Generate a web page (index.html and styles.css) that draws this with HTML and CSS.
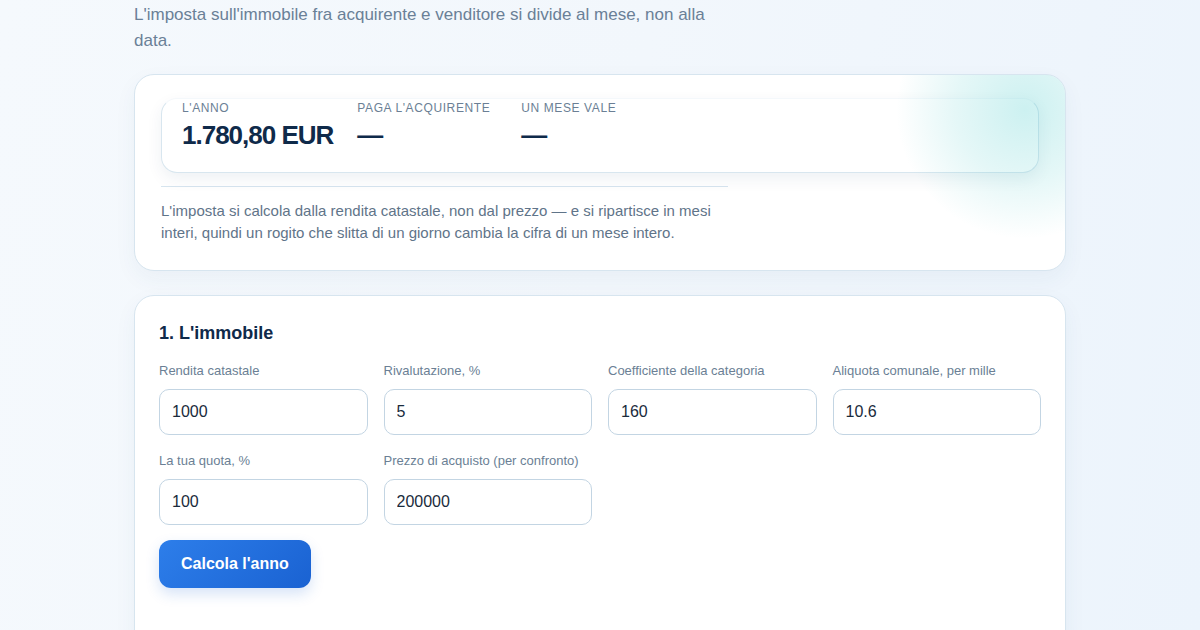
FILE: index.html
```html
<!DOCTYPE html>
<html lang="it">
<head>
<meta charset="utf-8">
<title>IMU al rogito</title>
<link rel="stylesheet" href="styles.css">
</head>
<body>
<main class="page">
  <p class="lead">L'imposta sull'immobile fra acquirente e venditore si divide al mese, non alla data.</p>

  <section class="card summary">
    <div class="glow"></div>
    <div class="result">
      <div class="stat">
        <div class="stat-label">L'anno</div>
        <div class="stat-value">1.780,80 EUR</div>
      </div>
      <div class="stat">
        <div class="stat-label">Paga l'acquirente</div>
        <div class="stat-value">—</div>
      </div>
      <div class="stat">
        <div class="stat-label">Un mese vale</div>
        <div class="stat-value">—</div>
      </div>
    </div>
    <hr class="divider">
    <p class="note">L'imposta si calcola dalla rendita catastale, non dal prezzo — e si ripartisce in mesi interi, quindi un rogito che slitta di un giorno cambia la cifra di un mese intero.</p>
  </section>

  <section class="card form">
    <h2 class="form-title">1. L'immobile</h2>
    <div class="grid">
      <label class="field">
        <span class="field-label">Rendita catastale</span>
        <input class="input" type="text" value="1000">
      </label>
      <label class="field">
        <span class="field-label">Rivalutazione, %</span>
        <input class="input" type="text" value="5">
      </label>
      <label class="field">
        <span class="field-label">Coefficiente della categoria</span>
        <input class="input" type="text" value="160">
      </label>
      <label class="field">
        <span class="field-label">Aliquota comunale, per mille</span>
        <input class="input" type="text" value="10.6">
      </label>
      <label class="field">
        <span class="field-label">La tua quota, %</span>
        <input class="input" type="text" value="100">
      </label>
      <label class="field">
        <span class="field-label">Prezzo di acquisto (per confronto)</span>
        <input class="input" type="text" value="200000">
      </label>
    </div>
    <button class="btn" type="button">Calcola l'anno</button>
  </section>
</main>
</body>
</html>
```

FILE: styles.css
```css
* { box-sizing: border-box; }

html, body {
  margin: 0;
  padding: 0;
  height: 100%;
}

body {
  font-family: "Liberation Sans", Arial, sans-serif;
  background: linear-gradient(100deg, #f5f9fd 0%, #f2f7fc 50%, #ecf4fc 100%);
  color: #0f2a4a;
  overflow: hidden;
}

.page {
  width: 932px;
  margin: 0 auto;
  padding-top: 2px;
}

.lead {
  margin: 0 0 20px;
  max-width: 600px;
  font-size: 17px;
  line-height: 26px;
  color: #6a8097;
}

.card {
  background: #ffffff;
  border: 1px solid #d7e5ef;
  border-radius: 20px;
  box-shadow: 0 8px 22px rgba(30, 70, 120, 0.05);
}

.summary {
  position: relative;
  overflow: hidden;
  padding: 23px 26px 26px;
  margin-bottom: 24px;
}

.glow {
  position: absolute;
  right: -90px;
  top: -95px;
  width: 260px;
  height: 260px;
  border-radius: 50%;
  background: radial-gradient(circle, rgba(60, 200, 200, 0.26) 0%, rgba(70, 200, 200, 0.14) 38%, rgba(80, 200, 200, 0) 70%);
  pointer-events: none;
  z-index: 2;
}

.result {
  position: relative;
  display: flex;
  gap: 24px;
  padding: 1px 20px 20px;
  border: 1px solid #d8e6ef;
  border-top-color: #f4f8fb;
  border-radius: 16px;
  background: #ffffff;
  box-shadow: 0 6px 16px rgba(20, 60, 100, 0.07);
}

.stat:nth-child(2) { margin-right: 7px; }

.stat-label {
  font-size: 12px;
  line-height: 16px;
  letter-spacing: 0.6px;
  text-transform: uppercase;
  color: #6b7f95;
}

.stat-value {
  margin-top: 2px;
  font-size: 26px;
  line-height: 34px;
  font-weight: 700;
  letter-spacing: -1px;
  color: #0f2a4a;
}

.divider {
  margin: 13px 0 0;
  width: 567px;
  border: 0;
  border-top: 1px solid #d7e5ef;
}

.note {
  margin: 13px 0 0;
  max-width: 568px;
  font-size: 15px;
  line-height: 22px;
  color: #5f7489;
}

.form {
  padding: 25px 24px 40px;
  min-height: 360px;
}

.form-title {
  margin: 0 0 17px;
  font-size: 18px;
  line-height: 24px;
  font-weight: 700;
  color: #0f2a4a;
}

.grid {
  display: grid;
  grid-template-columns: repeat(4, 1fr);
  column-gap: 16px;
  row-gap: 17px;
}

.field {
  display: flex;
  flex-direction: column;
  gap: 10px;
}

.field-label {
  font-size: 13px;
  line-height: 17px;
  color: #6b7f95;
}

.input {
  height: 46px;
  width: 100%;
  padding: 0 12px;
  border: 1px solid #c3d5e3;
  border-radius: 10px;
  background: #ffffff;
  font-family: "Liberation Sans", Arial, sans-serif;
  font-size: 16px;
  color: #1a2b3c;
}

.btn {
  margin-top: 15px;
  height: 48px;
  padding: 0 22px;
  border: 0;
  border-radius: 12px;
  background: linear-gradient(135deg, #2d7eea 0%, #1a62d2 100%);
  color: #ffffff;
  font-family: "Liberation Sans", Arial, sans-serif;
  font-size: 16px;
  font-weight: 700;
  box-shadow: 0 6px 14px rgba(30, 100, 210, 0.18);
}
```
